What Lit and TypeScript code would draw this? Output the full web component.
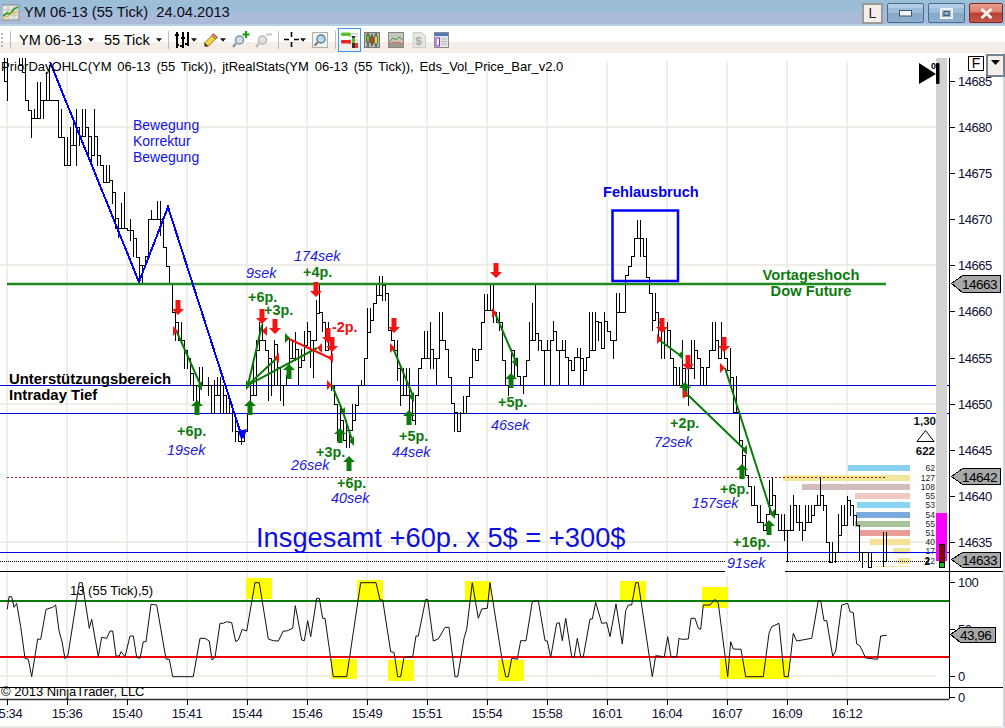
import { LitElement, html, css, svg } from "lit";
import { customElement } from "lit/decorators.js";

const barGroups: [number, string][] = [
  [4, "50-81 50-100 50-50 50-50 50-50 50-65 50-72 50-100 100-110 118-137 109-118 82-118 82-118 100-118 72-100 65-100 100-100 100-100 109-137 109-137 145-165 137-165 127-165 118-145 109-165 127-145 109-136 109-136 127-155 136-165 109-155 136-165 155-165 165-182 165-182 165-182"],
  [112, "180-203 192-228 218-237 203-228 192-228 228-230 219-240 230-256 238-257 257-284 265-284 256-265 219-256 210-219 219-219 201-219 201-235 219-247 247-266 266-284 284-312 312-340 322-340 322-340 348-368 350-368"],
  [190, "358-385 373-400 385-405 367-405 367-385 385-385 377-395 385-413 380-413 377-395 377-413 385-413 395-413 395-413 404-431 413-441 431-441 431-444 431-441 413-431 385-413 358-395 340-395 322-350 320-340 340-350 350-400 358-395 340-385 344-385 367-400 385-405 375-385 340-375 340-358 332-360 349-385 349-367 331-360 322-345 331-367 340-377 300-340 284-313 312-331 322-350 322-350 340-390 385-404 404-440 404-440 420-440 420-447 430-447 404-430 404-420 385-405 380-385 358-385 308-358 308-332 303-320 284-303 276-295"],
  [382, "276-300 285-300 293-330 330-340 340-350 340-380 368-405 368-395 368-395 368-413 395-420 395-424 368-395 358-368 331-358 331-358 322-368 349-368 358-385 312-350 312-340 340-349 349-377 377-403 403-431 412-431 412-431 396-413 396-413 377-396 348-377 349-360 349-360 322-349 294-322 294-310 285-310 285-322 312-322 312-330 322-360 360-385 385-395 349-385 350-376 358-376 376-385 376-393 360-376 322-360 303-340 285-340 333-350 340-350 350-385 340-350 340-385 321-340 331-350 350-385 340-350 340-357 357-385 360-370 357-370 348-357 348-385 358-385 357-370 312-357 312-350 312-350 321-340 322-348 312-348 321-331 331-340 340-358 293-340 293-312 312-312 275-312 266-275 256-266 238-256 220-238 220-256 238-256 238-277 277-293 293-330 293-320 312-340 322-358 330-358 322-345 330-358 358-385 367-385 367-385 340-385 368-395 368-405 340-368 340-378 350-358 358-385 367-385 367-385 350-367 322-350 322-350 340-358 322-358 340-358 358-370 348-385 377-412 376-412 412-445 440-465 455-475 475-486 486-505 486-505 505-522 505-522 522-530 514-530 480-514 478-505 495-514 514-530 514-530 514-540 530-561 505-530 495-530 505-522 505-530 522-540 505-530 505-522 505-522 505-515 495-505 477-505 495-510 505-542 542-562 542-562 552-562 514-552 505-535 505-525 496-525 500-515 505-525 515-525 525-560 552-567 552-552 552-567 552-567"],
  [883, "532-566 532-561"],
];

function barsPath(): string {
  let d = "";
  let px = -99, pt = 0, pb = 0;
  for (const [start, s] of barGroups) {
    s.split(" ").forEach((tok, i) => {
      const [t, b] = tok.split("-").map(Number);
      const x = start + i * 3;
      d += `M${x + 0.5} ${t}V${b + 0.5}`;
      if (px === x - 3) {
        if (t > pb) d += `M${px + 0.5} ${pb + 0.5}H${x + 0.5}V${t}`;
        else if (b < pt) d += `M${px + 0.5} ${pt + 0.5}H${x + 0.5}V${b}`;
        else {
          const y = t > pt ? t : Math.min(b, pb);
          d += `M${px + 0.5} ${y + 0.5}H${x + 0.5}`;
        }
      }
      px = x; pt = t; pb = b;
    });
  }
  return d;
}

const z8 = [22,118,27,80,35,80,42,112,50,100,62,170,75,265,85,268,95,320,113,207,122,208,138,118,158,112,167,105,177,182,186,215,195,266,204,255,238,38,247,38,268,175,275,148,295,260,305,202,320,205,330,183,338,183,348,258,358,258,363,245,375,260,390,198,400,198,410,262,420,265,430,215,438,215,453,103,470,105,498,267,508,268,518,320,580,320,600,205,615,205,628,213,636,270,645,262,660,160,670,160,680,155,695,158,707,215,715,210,727,178,740,183,765,38,778,38,805,207,820,212,835,213,850,183,860,183,878,175,886,107,905,210,913,212,923,152,932,200,950,85,958,85,968,145,975,145,1000,320];
const z9 = [10,320,50,320,92,38,138,38,150,90,158,90,182,245,192,247,203,320,212,320,222,262,248,260,258,198,265,198,287,88,293,88,310,213,325,207,345,172,357,172,375,320,383,320,402,205,410,178,427,38,445,145,455,117,472,115,480,38,515,262,527,320,535,320,545,265,562,268,572,212,588,212,607,95,625,92,645,212,652,213,662,262,680,160,688,158,697,212,707,145,725,260,733,260,742,205,752,260,760,260,780,147,787,147,797,97,815,160,830,158,840,200,858,102,877,222,887,122,895,105,905,105,917,38,925,38,967,320,977,257,1003,260];
const z10 = [8,200,18,260,35,260,42,205,50,208,70,207,78,145,90,145,100,175,107,178,115,105,135,105,150,88,160,100,188,320,197,215,205,237,228,238,242,320,295,320,312,190,320,170,342,160,358,320,370,320,385,190,395,213,440,205,460,92,467,92,477,152,485,152,503,258,512,243,530,105,548,100,555,125,565,128,575,222,585,228,602,264,637,268,647,198,665,196];

function oscPoints(): string {
  const out: string[] = [];
  const add = (a: number[], ox: number) => {
    for (let i = 0; i < a.length; i += 2) out.push(`${(ox + a[i] / 3).toFixed(1)},${(570 + a[i + 1] / 3).toFixed(1)}`);
  };
  add(z8, 0); add(z9, 330); add(z10, 665);
  return out.join(" ");
}

const gridX = [7, 67, 127, 187, 247, 307, 367, 427, 487, 547, 607, 667, 727, 787, 847];
const times = ["15:34","15:36","15:40","15:41","15:44","15:46","15:49","15:51","15:54","15:58","16:01","16:04","16:07","16:09","16:12"];
const prices: [string, number][] = [["14685",81],["14680",127],["14675",173],["14670",219],["14665",265],["14660",311],["14655",358],["14650",404],["14645",450],["14640",496],["14635",542],["100",582],["50",629],["0",676],["0",697]];

const yellow = [[246,578,26,21],[331,659,26,20],[357,580,26,20],[388,660,26,21],[465,581,26,20],[498,660,26,21],[620,581,26,20],[702,587,26,21],[720,659,69,20]];

const profile: [number, number, string, string][] = [
  [465,848,"#8ad0f0","62"],[475,783,"#f1e79b","127"],[484,802,"#d3bcbc","108"],[493,855,"#f0c6c0","55"],[502,857,"#8cd4f4","53"],[512,856,"#7ba9dc","54"],[521,855,"#a7c19a","55"],[530,859,"#e89e96","51"],[539,870,"#f5e096","40"],[548,893,"#f1e79b","17"],[558,898,"#f1e79b","12"],
];

const greenLines = ["176,330 201,386","248,385 262,325","248,385 277,358","248,385 317,348","332,385 343,412 352,440","393,348 413,396","495,313 516,362","658,339 681,356","688,395 717,423 745,450","725,368 772,515"];

const downs = [[178,300],[262,309],[275,319],[316,282],[328,328],[332,337],[394,318],[496,263],[662,318],[688,355],[724,337]];
const ups = [[197,400],[250,400],[289,364],[340,428],[349,456],[409,410],[511,373],[685,382],[742,464],[769,520]];
const redR = [[173,331],[327,385],[390,348],[492,313],[657,339],[683,394],[720,368]];
const redL = [[267,331],[279,358],[322,348],[333,358]];
const greenL = [[202,386],[345,412],[354,441],[414,397],[517,362],[683,355],[747,450],[775,514]];
const greenR = [[246,385],[285,338]];

const gains: [number, number, string][] = [[177,436,"+6p."],[303,277,"+4p."],[248,302,"+6p."],[264,315,"+3p."],[316,457,"+3p."],[337,488,"+6p."],[399,441,"+5p."],[498,407,"+5p."],[670,428,"+2p."],[720,494,"+6p."],[733,547,"+16p."]];
const seks: [number, number, string][] = [[167,455,"19sek"],[246,278,"9sek"],[294,261,"174sek"],[291,470,"26sek"],[331,503,"40sek"],[392,457,"44sek"],[491,430,"46sek"],[654,447,"72sek"],[692,508,"157sek"],[727,568,"91sek"]];

const down = (x: number, y: number) => svg`<path class="red" d="M${x - 2.5} ${y}h5v9h3.500l-6 6l-6 -6h3.500z"></path>`;
const up = (x: number, y: number) => svg`<path class="grn" d="M${x} ${y}l6 6h-3.500v9h-5v-9h-3.500z"></path>`;
const triR = (x: number, y: number, c: string) => svg`<path class=${c} d="M${x} ${y - 5}l5 5l-5 5z"></path>`;
const triL = (x: number, y: number, c: string) => svg`<path class=${c} d="M${x} ${y - 5}l-5 5l5 5z"></path>`;

const caret = html`<svg class="caret" viewBox="0 0 7 4"><path d="M0 0h7l-3.500 4z"></path></svg>`;
const caret2 = html`<svg class="caret near" viewBox="0 0 7 4"><path d="M0 0h7l-3.500 4z"></path></svg>`;

@customElement("app-root")
export class AppRoot extends LitElement {
  static styles = css`
    :host { display: block; width: 1005px; height: 728px; overflow: hidden; background: #fff; font-family: "Liberation Sans", Arial, sans-serif; color: #000; }
    .win { display: flex; flex-direction: column; width: 1005px; height: 728px; }
    .title { flex: none; height: 26px; box-sizing: border-box; display: flex; align-items: center; padding: 0 2px 2px 2px;
      background: linear-gradient(#9bbdd6 0, #9bbdd6 12px, #aabad9 12px, #aabad9 24px, #b7d0e4 24px); }
    .appicon { width: 18px; height: 18px; margin-right: 4px; flex: none; }
    .ttext { font-size: 14.7px; white-space: pre; flex: 1; color: #0a0a14; }
    .btns { display: flex; gap: 3px; align-items: center; margin-top: 2px; }
    .lbtn { width: 17px; height: 17px; border: 2px solid #9a9a9a; background: #f5eee8; color: #222; font-size: 14px; line-height: 17px; text-align: center; margin-right: 1px; }
    .wbtn { width: 37px; height: 20px; box-sizing: border-box; border: 1px solid #3f6f97; border-radius: 2px; display: flex; align-items: center; justify-content: center; margin-right: 1px;
      background: linear-gradient(#b3cbe3 0, #b3cbe3 4px, #9cbcd8 4px, #9cbcd8 9px, #88a8c4 9px, #90aece 100%); }
    .wbtn.x { width: 34px; margin-right: 0; border-color: #7c2a22; background: linear-gradient(#e79a8d 0, #dd8174 8px, #b8402f 9px, #c4564a 100%); }
    .toolbar { flex: none; height: 27px; display: flex; align-items: center; padding-left: 1px; background: linear-gradient(#fff 0, #fff 16px, #f5eee8 16px); font-size: 14.5px; }
    .grip { width: 2px; height: 14px; border-left: 2px dotted #bbb; margin-right: 5px; }
    .sep { width: 1px; height: 18px; background: #bdbdbd; flex: none; }
    .combo { display: flex; align-items: center; white-space: nowrap; }
    .caret { width: 6px; height: 4px; fill: #111; margin-left: 6px; flex: none; }
    .caret.near { margin-left: 1px; }
    .ti { flex: none; display: block; }
    .sel { box-sizing: border-box; width: 23px; height: 24px; border: 1px solid #3399ff; display: flex; align-items: center; justify-content: center; flex: none; }
    .chart { position: relative; flex: none; width: 1003px; height: 673px; border-right: 2px solid #cfd6dc; border-bottom: 2px solid #e8e8e0; background: #fff; }
    .chart svg { display: block; }
    .fbtn { position: absolute; left: 968px; top: 3px; width: 14px; height: 13px; border: 1px solid #000; background: #fff; font-size: 14px; line-height: 13px; text-align: center; }
    .dd { position: absolute; left: 986px; top: 1px; width: 15px; height: 15px; border: 2px solid #74838f; background: #f5eee8; display: flex; justify-content: center; padding-top: 4px; }
    .dd svg { width: 9px; height: 5px; fill: #000; }
    .grid { stroke: #e8e8df; stroke-width: 1.4; fill: none; }
    .bars { stroke: #000; stroke-width: 1; fill: none; shape-rendering: crispEdges; }
    .osc { stroke: #111; stroke-width: 1; fill: none; }
    .hblue { stroke: #0000e6; stroke-width: 1; shape-rendering: crispEdges; }
    .zig { stroke: #0000ff; stroke-width: 2; fill: none; shape-rendering: crispEdges; }
    .box { stroke: #0000ff; stroke-width: 2.5; fill: none; }
    .gl { stroke: #0a7a0a; stroke-width: 2; fill: none; }
    .rl { stroke: #f01010; stroke-width: 2; fill: none; }
    .red { fill: #f41414; }
    .grn { fill: #0a7a0a; }
    .blk { stroke: #000; stroke-width: 1; shape-rendering: crispEdges; fill: none; }
    .dot { stroke: #000; stroke-width: 1; stroke-dasharray: 1 1; shape-rendering: crispEdges; }
    .dotr { stroke: #a02020; stroke-width: 1; stroke-dasharray: 2 2; shape-rendering: crispEdges; }
    text { font-family: "Liberation Sans", Arial, sans-serif; }
    .t13 { font-size: 13px; fill: #000; }
    .head { font-size: 13px; fill: #000; word-spacing: 2.2px; }
    .ax { font-size: 13px; fill: #101030; letter-spacing: -0.45px; }
    .tm { font-size: 13px; fill: #101030; letter-spacing: -0.4px; text-anchor: middle; }
    .blue14 { font-size: 14px; fill: #1010f0; }
    .bb { font-size: 14.6px; font-weight: bold; fill: #0000ee; }
    .gb { font-size: 14.7px; font-weight: bold; fill: #0f7a0f; text-anchor: middle; }
    .gain { font-size: 14.4px; font-weight: bold; fill: #0f7a0f; }
    .loss { font-size: 14.4px; font-weight: bold; fill: #f01010; }
    .sek { font-size: 14.4px; font-style: italic; fill: #1818e8; }
    .kb { font-size: 14.9px; font-weight: bold; fill: #000; }
    .big { font-size: 27.3px; fill: #0f0fe0; }
    .pn { font-size: 8.5px; fill: #222; text-anchor: end; }
    .pn2 { font-size: 10px; font-weight: bold; fill: #000; text-anchor: end; }
    .stat { font-size: 11.5px; font-weight: bold; fill: #111; text-anchor: end; }
    .tag { fill: #a8a8a8; stroke: #000; stroke-width: 1; shape-rendering: crispEdges; }
    .tagt { font-size: 13.5px; fill: #000; letter-spacing: -0.5px; }
    .zero { font-size: 9px; font-weight: bold; fill: #000; }
  `;

  render() {
    return html`<div class="win">
      <div class="title">
        <svg class="appicon" viewBox="0 0 18 18">
          <rect x="0" y="2" width="17" height="15" fill="#e4e4dc" stroke="#8a8a8a"></rect>
          <path d="M0 7h17M0 12h17M6 2v15M12 2v15" stroke="#c0c0c0" fill="none"></path>
          <path d="M1 13l4-3 3 1 4-5 4-2" stroke="#1ea01e" stroke-width="1.6" fill="none"></path>
          <path d="M1 15l5-2 4-3 6-1" stroke="#f5a623" stroke-width="1" fill="none"></path>
        </svg>
        <span class="ttext">YM 06-13 (55 Tick)  24.04.2013</span>
        <div class="btns">
          <div class="lbtn">L</div>
          <div class="wbtn"><svg width="13" height="7" viewBox="0 0 13 7"><rect x="0.5" y="0.5" width="12" height="5.5" fill="#f4f4f4" stroke="#3a5a74"></rect></svg></div>
          <div class="wbtn"><svg width="13" height="11" viewBox="0 0 13 11"><rect x="1" y="1" width="11" height="9" fill="none" stroke="#f0f0f0" stroke-width="2"></rect><rect x="4" y="3.5" width="5" height="4" fill="none" stroke="#3a5a74"></rect></svg></div>
          <div class="wbtn x"><svg width="13" height="11" viewBox="0 0 13 11"><path d="M1.500 1l10 9M11.500 1l-10 9" stroke="#f4f0ec" stroke-width="3"></path></svg></div>
        </div>
      </div>

      <div class="toolbar">
        <div class="grip"></div>
        <div class="sep"></div>
        <div class="combo" style="margin-left:8px">YM 06-13${caret}</div>
        <div class="combo" style="margin-left:10px">55 Tick${caret}</div>
        <div class="sep" style="margin-left:6px"></div>
        <svg class="ti" style="margin-left:5px" width="16" height="18" viewBox="0 0 16 18"><path d="M3 1v16M9 1v16M14 1v14M1 4h4M7 7h4M11 13h4M3 14h2M6 15h3" stroke="#000" stroke-width="2" fill="none"></path></svg>
        ${caret2}
        <svg class="ti" style="margin-left:6px" width="16" height="18" viewBox="0 0 18 18"><path d="M2 12L12 2l4 4L6 16H2z" fill="#f6d24a" stroke="#8a6d10"></path><path d="M12 2l4 4-2 2-4-4z" fill="#e88a8a" stroke="#8a5a20"></path><path d="M2 12l4 4H2z" fill="#333"></path></svg>
        ${caret2}
        <svg class="ti" style="margin-left:6px" width="18" height="18" viewBox="0 0 18 18"><circle cx="7.500" cy="9" r="4" fill="#cfe0ea" stroke="#7e96a6" stroke-width="1.5"></circle><path d="M4 12.500L1 16" stroke="#7e96a6" stroke-width="2.2"></path><path d="M14 0v7M10.500 3.500h7" stroke="#10a010" stroke-width="2.2"></path></svg>
        <svg class="ti" style="margin-left:5px" width="17" height="18" viewBox="0 0 17 18"><circle cx="7.500" cy="9" r="4" fill="#e2e2e2" stroke="#b8b8b8" stroke-width="1.5"></circle><path d="M4 12.500L1 16" stroke="#b8b8b8" stroke-width="2.2"></path><path d="M11 3.500h6" stroke="#c8c8c8" stroke-width="2"></path></svg>
        <div class="sep" style="margin-left:6px"></div>
        <svg class="ti" style="margin-left:5px" width="15" height="15" viewBox="0 0 15 15"><path d="M0 7.500h5M10 7.500h5M7.500 0v5M7.500 10v5" stroke="#000" stroke-width="1.6"></path></svg>
        ${caret2}
        <svg class="ti" style="margin-left:6px" width="16" height="16" viewBox="0 0 16 16"><rect x="0.5" y="0.5" width="15" height="15" fill="#f2f2ee" stroke="#b0b0a8"></rect><circle cx="9" cy="7" r="4" fill="#bcd6ea" stroke="#5b7f99" stroke-width="1.4"></circle><path d="M6 10l-3.500 3.500" stroke="#777" stroke-width="2"></path></svg>
        <div class="sep" style="margin-left:7px"></div>
        <div class="sel" style="margin-left:2px">
          <svg width="19" height="18" viewBox="0 0 19 18"><path d="M9 3h9M9 5.500h9M9 9h9M9 13h4" stroke="#bdbdbd" fill="none"></path><rect x="1" y="1.500" width="10" height="3.500" rx="1.500" fill="#5fbf2f"></rect><rect x="1" y="9" width="10" height="3.500" rx="1" fill="#e8262a"></rect><rect x="12" y="5" width="3" height="12" fill="#333"></rect><rect x="12" y="7" width="3" height="5" fill="#58b82e"></rect><rect x="15" y="12" width="3" height="5" fill="#e23a2a"></rect></svg>
        </div>
        <svg class="ti" style="margin-left:3px" width="16" height="16" viewBox="0 0 16 16"><rect x="0.5" y="0.5" width="15" height="15" fill="#b8b8b0" stroke="#777"></rect><path d="M4 1v14M8 2v12M12 1v14" stroke="#222"></path><rect x="2.500" y="3" width="3" height="7" fill="#60c030" stroke="#333" stroke-width=".5"></rect><rect x="6.500" y="5" width="3" height="6" fill="#e03030" stroke="#333" stroke-width=".5"></rect><rect x="10.500" y="4" width="3" height="8" fill="#c8e030" stroke="#333" stroke-width=".5"></rect></svg>
        <svg class="ti" style="margin-left:8px" width="16" height="16" viewBox="0 0 16 16"><rect x="0.5" y="0.5" width="15" height="15" fill="#c6c6bc" stroke="#888"></rect><rect x="1" y="11" width="14" height="4" fill="#9a9a90"></rect><path d="M1 10l4-4 3 2 3-3 4 3" stroke="#3fa04a" fill="none"></path><path d="M1 12l4-2 3 1 3-1 4 2" stroke="#e0604a" fill="none"></path></svg>
        <svg class="ti" style="margin-left:8px" width="14" height="16" viewBox="0 0 14 16"><path d="M1 .5h9l3.500 3.500v11.500H1z" fill="#e6e6e0" stroke="#cfcfc8"></path><text x="3.500" y="12.500" font-size="11" font-weight="bold" fill="#a8a8a0" font-family="Liberation Sans">$</text></svg>
        <svg class="ti" style="margin-left:8px" width="15" height="16" viewBox="0 0 15 16"><rect x="0.5" y="0.5" width="14" height="15" fill="#e4e4e4" stroke="#8a8a8a"></rect><rect x="1" y="1" width="13" height="3" fill="#4a78b8"></rect><rect x="2" y="6" width="3.500" height="8" fill="#fff" stroke="#8a2be2"></rect><path d="M7 7h6M7 9.500h6M7 12h6" stroke="#b0b8c8"></path></svg>
      </div>

      <div class="chart">
        <svg width="1003" height="673" viewBox="0 53 1003 673">
          <defs><clipPath id="clipPrice"><rect x="0" y="58" width="936" height="512"></rect></clipPath></defs>

          ${gridX.map((x) => svg`<path class="grid" d="M${x} 61V699"></path>`)}
          ${[127, 265, 404, 542, 676].map((y) => svg`<path class="grid" d="M0 ${y}H936"></path>`)}

          ${yellow.map((r) => svg`<rect x=${r[0]} y=${r[1]} width=${r[2]} height=${r[3]} fill="#ffff00"></rect>`)}

          ${profile.map((p) => svg`<rect x=${p[1]} y=${p[0]} width=${910 - p[1]} height="6" fill=${p[2]}></rect>
            <text class="pn" x="935" y=${p[0] + 6}>${p[3]}</text>`)}
          <rect x="876" y="566" width="34" height="1" fill="#f1e79b"></rect>

          <path class="dotr" d="M7 477.5H887"></path>
          <path class="hblue" d="M0 385.5H949M0 413.5H949M0 552.5H949"></path>
          <path class="dot" d="M0 561.5H930"></path>

          <path class="bars" clip-path="url(#clipPrice)" d=${barsPath()}></path>

          <path d="M7 284H886" stroke="#1f8a1f" stroke-width="2.6"></path>
          <path class="zig" d="M50 62L139 282L168 207L240 431"></path>
          <path d="M238 431l9 -2l-3 9l-3 1z" fill="#0000ff"></path>
          <rect class="box" x="612.5" y="210.5" width="65.5" height="70.5"></rect>

          ${greenLines.map((p) => svg`<polyline class="gl" points=${p}></polyline>`)}
          <path class="rl" d="M287 338L330 358"></path>

          ${downs.map((p) => down(p[0], p[1]))}
          ${ups.map((p) => up(p[0], p[1]))}
          ${redR.map((p) => triR(p[0], p[1], "red"))}
          ${redL.map((p) => triL(p[0], p[1], "red"))}
          ${greenL.map((p) => triL(p[0], p[1], "grn"))}
          ${greenR.map((p) => triR(p[0], p[1], "grn"))}

          <text class="head" x="1" y="71">PriorDayOHLC(YM 06-13 (55 Tick)), jtRealStats(YM 06-13 (55 Tick)), Eds_Vol_Price_Bar_v2.0</text>
          <text class="blue14" x="133" y="130">Bewegung</text>
          <text class="blue14" x="133" y="146">Korrektur</text>
          <text class="blue14" x="133" y="162">Bewegung</text>
          <text class="bb" x="603" y="197">Fehlausbruch</text>
          <text class="gb" x="811" y="280">Vortageshoch</text>
          <text class="gb" x="811" y="296">Dow Future</text>
          <text class="kb" x="9" y="384">Unterstützungsbereich</text>
          <text class="kb" x="9" y="400">Intraday Tief</text>
          <rect x="725" y="554" width="60" height="22" fill="#fff"></rect>
          ${gains.map((g) => svg`<text class="gain" x=${g[0]} y=${g[1]}>${g[2]}</text>`)}
          ${seks.map((g) => svg`<text class="sek" x=${g[0]} y=${g[1]}>${g[2]}</text>`)}
          <text class="loss" x="332" y="332">-2p.</text>
          <text class="big" x="256" y="547">Insgesamt +60p. x 5$ = +300$</text>

          <path class="blk" d="M0 571.5H725M785 571.5H1003M0 687.5H1003M949.5 58V699"></path>
          <path d="M0 699.5H949" stroke="#333" stroke-width="1.6"></path>
          ${gridX.map((x) => svg`<path class="blk" d="M${x + 0.5} 699V705"></path>`)}

          <path d="M0 601H949" stroke="#0a7a0a" stroke-width="2"></path>
          <path d="M0 657H949" stroke="#f00000" stroke-width="2"></path>
          <polyline class="osc" points=${oscPoints()}></polyline>
          <text class="t13" x="70" y="595">13 (55 Tick),5)</text>
          <text class="t13" x="1" y="696">© 2013 NinjaTrader, LLC</text>

          ${times.map((t, i) => svg`<text class="tm" x=${gridX[i]} y="718">${t}</text>`)}

          <rect x="936" y="58" width="11" height="455" fill="#d2d2d2"></rect>
          <rect x="936" y="513" width="11" height="48" fill="#ff00ff"></rect>
          <rect x="939.5" y="544.5" width="5" height="18" fill="#8b0000" stroke="#000"></rect>
          <rect x="939.5" y="562.5" width="5" height="5" fill="#22b822" stroke="#000"></rect>
          <path d="M919 63L936 74L919 84z" fill="#000"></path>
          <rect x="936" y="63" width="3.5" height="21" fill="#000" rx="1"></rect>
          <text class="zero" x="931" y="69">0</text>

          <text class="stat" x="936" y="425">1,30</text>
          <path d="M925.5 430.5L934 441.5H917z" fill="#fff" stroke="#000"></path>
          <text class="stat" x="935" y="455">622</text>
          <text class="pn2" x="930" y="565">2</text>

          ${prices.map((p) => svg`<path class="blk" d="M949 ${p[1] + 0.5}H955"></path><text class="ax" x="958" y=${p[1] + 5}>${p[0]}</text>`)}

          <path class="tag" d="M951.5 283.5L962.5 275.5H1000.5V292.5H962.5z"></path>
          <text class="tagt" x="962" y="289">14663</text>
          <path class="tag" d="M951.5 476.5L962.5 468.5H1000.5V484.5H962.5z"></path>
          <text class="tagt" x="962" y="482">14642</text>
          <path class="tag" d="M951.5 559.5L962.5 552.5H1000.5V567.5H962.5z"></path>
          <text class="tagt" x="962" y="565">14633</text>
          <path class="tag" d="M950.5 634.5L960.5 627.5H995.5V642.5H960.5z"></path>
          <text class="tagt" x="960" y="640">43,96</text>
        </svg>
        <div class="fbtn">F</div>
        <div class="dd"><svg viewBox="0 0 9 5"><path d="M0 0h9l-4.500 5z"></path></svg></div>
      </div>
    </div>`;
  }
}
